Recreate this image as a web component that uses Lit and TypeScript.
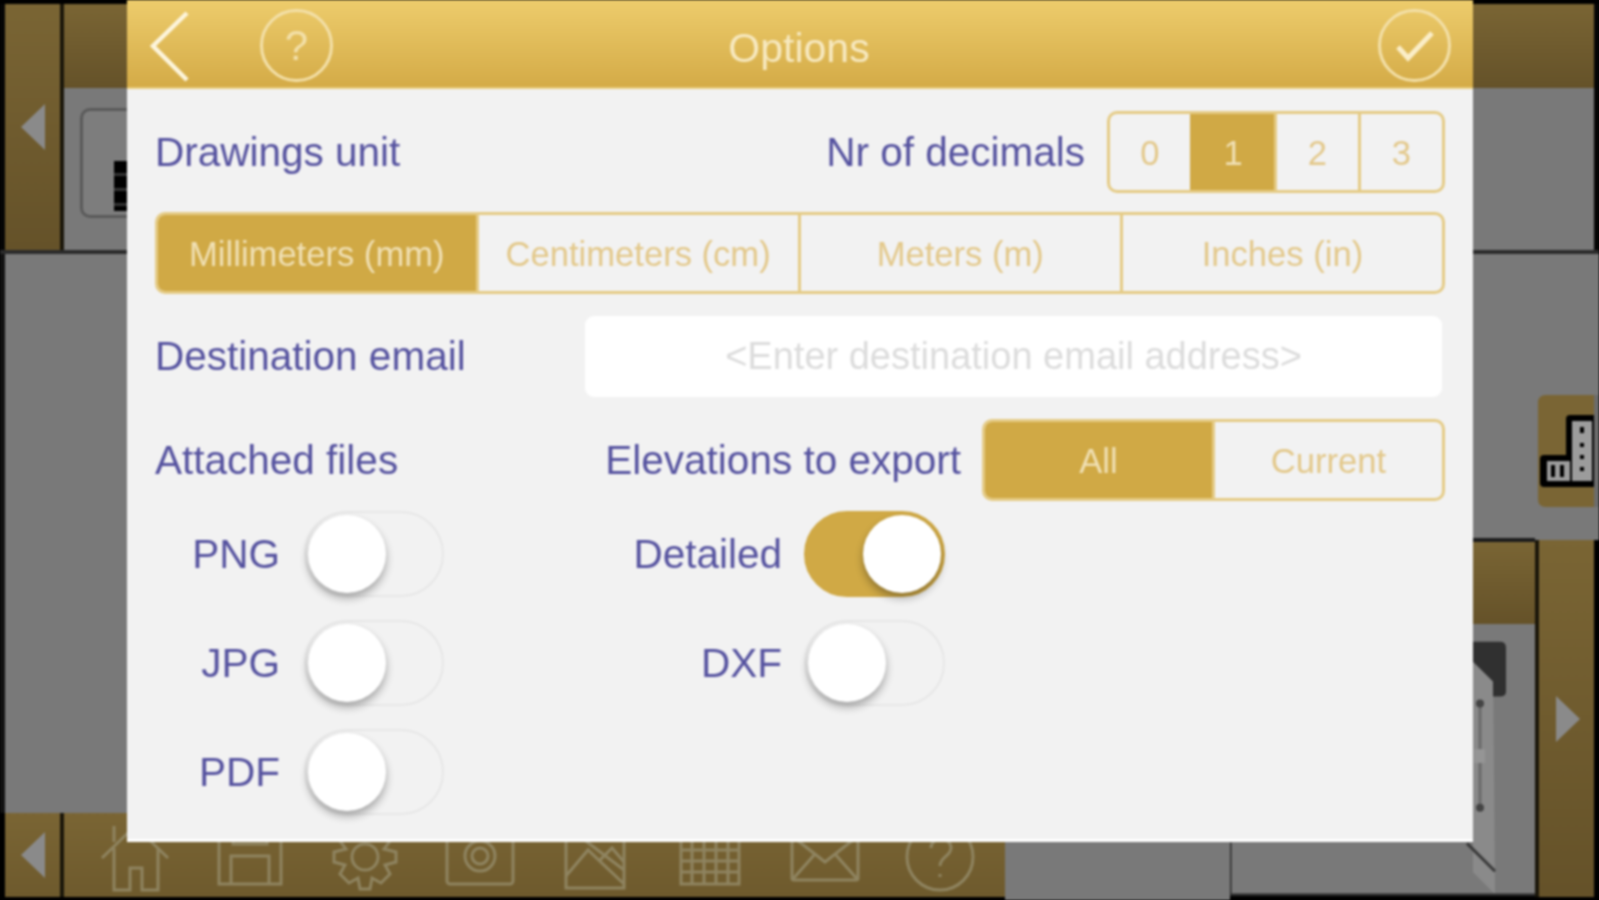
import { LitElement, html, css, svg } from "lit";
import { customElement } from "lit/decorators.js";

const ic = (body: unknown) => html`<svg class="ico" viewBox="0 0 70 70" fill="none" stroke="#8f8460" stroke-width="3">${body}</svg>`;

@customElement("app-root")
export class AppRoot extends LitElement {
  static styles = css`
    :host { display: block; width: 1599px; height: 900px; overflow: hidden; background: #000; }
    * { box-sizing: border-box; }
    .scene { position: relative; width: 1599px; height: 900px; background: #050505; font-family: "Liberation Sans", Arial, sans-serif; display: flex; flex-direction: column; filter: blur(0.9px); }
    .gold { background: linear-gradient(#7a6534, #655229); }
    .topblack { height: 4px; flex: none; background: #000; }
    .upper { height: 246px; flex: none; display: flex; padding: 0 5px; }
    .rail { width: 55px; flex: none; }
    .sep { width: 4px; flex: none; background: #1a160a; }
    .main { flex: 1; display: flex; flex-direction: column; }
    .bar { height: 84px; flex: none; }
    .greyarea { flex: 1; background: #797979; padding: 20px 0 0 16px; }
    .tool { width: 120px; height: 110px; border: 3px solid #5a5a5a; border-radius: 10px; background: #7d7d7d; padding: 50px 0 0 31px; }
    .tool i { display: block; width: 14px; height: 50px; background: repeating-linear-gradient(#000 0 12px, #333 12px 15px); }
    .line { height: 4px; flex: none; background: #2b2b2b; }
    .lower { flex: 1; display: flex; min-height: 0; background: #797979; }
    .a { width: 1230px; flex: none; display: flex; flex-direction: column; padding-left: 5px; }
    .a .space { flex: 1; background: #797979; margin-left: -5px; border-left: 5px solid #111; }
    .bottom { height: 87px; flex: none; display: flex; align-items: stretch; width: 1005px; background: #000; margin-left: -5px; padding: 0 0 3px 5px; }
    .bottom .rail, .bottom .bar2 { background: linear-gradient(#7a6534, #6e5a2d); }
    .rail.tri { display: flex; align-items: center; justify-content: center; }
    .bar2 { flex: 1; height: 84px; display: flex; align-items: flex-end; gap: 45px; padding: 0 0 5px 36px; }
    .ico { width: 70px; height: 70px; flex: none; }
    .b { width: 305px; flex: none; display: flex; flex-direction: column; }
    .b .space { height: 284px; flex: none; }
    .b .dark { height: 4px; flex: none; background: #1c1c1c; }
    .b .head { height: 82px; flex: none; }
    .b svg { flex: 1; display: block; min-height: 0; }
    .c { width: 64px; flex: none; display: flex; flex-direction: column; }
    .c .top { height: 286px; flex: none; padding: 141px 0 0 3px; }
    .c .top svg { display: block; }
    .c .low { flex: 1; display: flex; background: #000; padding-bottom: 3px; }
    .c .low .rail { display: flex; align-items: center; justify-content: center; padding-left: 2px; background: linear-gradient(#7a6534, #655229); }

    .modal { position: absolute; left: 127px; top: 0; width: 1346px; height: 842px; background: #f2f2f2; border-bottom: 3px solid #fff; display: flex; flex-direction: column; }
    .hdr { height: 89px; flex: none; background: linear-gradient(#edcc6c, #d4ab47); border-bottom: 2px solid #e8cc7c; display: grid; grid-template-columns: 1fr auto 1fr; align-items: center; padding: 4px 22px 0 20px; }
    .hdr svg { display: block; }
    .hl { display: flex; align-items: center; gap: 67px; }
    .hr { display: flex; justify-content: flex-end; }
    .circ { position: relative; width: 73px; height: 73px; border: 3px solid #f3e0a9; border-radius: 50%; display: flex; align-items: center; justify-content: center; color: #f3e0a9; font-size: 42px; }
    .title { font-size: 41px; color: #f7e9c0; padding-top: 5px; }
    .body { flex: 1; padding: 22px 28px 0; display: flex; flex-direction: column; }
    .row { display: flex; align-items: center; height: 82px; flex: none; }
    .r2 { margin-top: 19px; }
    .r3 { margin-top: 21px; }
    .r4 { margin-top: 22px; }
    .lab { font-size: 40.5px; color: #55529f; white-space: nowrap; }
    .push { margin-left: auto; }
    .seg { display: flex; height: 82px; border: 3px solid #e5cb85; border-radius: 10px; overflow: hidden; flex: none; }
    .seg div { flex: 1 1 0; display: flex; align-items: center; justify-content: center; font-size: 34.6px; color: #e3c88a; border-left: 3px solid #e5cb85; padding-top: 2px; }
    .seg div:first-child { border-left: 0; }
    .seg div.on { background: #d0a945; color: #f0e0b4; border-color: #d0a945; }
    .dec { width: 338px; margin-left: 22px; }
    .dec div:first-child { flex-grow: .98; }
    .unit { width: 100%; }
    .unit div:first-child { flex-grow: .995; }
    .ele { width: 463px; margin-left: 21px; }
    .input { width: 857px; height: 81px; margin-left: auto; margin-right: 3px; background: #fff; border-radius: 9px; display: flex; align-items: center; justify-content: center; color: #dcdcdc; font-size: 38px; }
    .togs { display: flex; margin-top: 10px; }
    .col { display: flex; flex-direction: column; gap: 23px; flex: none; }
    .col.l { width: 289px; }
    .col.rr { width: 501px; }
    .t { display: flex; align-items: center; justify-content: flex-end; gap: 24px; height: 86px; }
    .col.rr .t { gap: 22px; }
    .sw { position: relative; width: 140px; height: 86px; border: 2px solid #e7e7e7; border-radius: 43px; flex: none; }
    .col.rr .sw { width: 141px; }
    .sw i { position: absolute; left: 2px; top: 2px; width: 78px; height: 78px; border-radius: 50%; background: #fff; box-shadow: 0 5px 9px rgba(0,0,0,.32); }
    .sw.on { background: #d0a945; border-color: #d0a945; }
    .sw.on i { left: auto; right: 2px; }
  `;

  private seg(items: string[], on: number, cls: string) {
    return html`<div class="seg ${cls}">${items.map((s, i) => html`<div class=${i === on ? "on" : ""}>${s}</div>`)}</div>`;
  }
  private tog(label: string, on = false) {
    return html`<div class="t"><span class="lab">${label}</span><div class="sw ${on ? "on" : ""}"><i></i></div></div>`;
  }

  render() {
    const triL = html`<svg width="24" height="46" viewBox="0 0 24 46"><path d="M24 0V46L0 23Z" fill="#8a8a8a"/></svg>`;
    const triR = html`<svg width="24" height="46" viewBox="0 0 24 46"><path d="M0 0V46L24 23Z" fill="#8a8a8a"/></svg>`;
    return html`<div class="scene">
      <div class="topblack"></div>
      <div class="upper">
        <div class="rail gold tri">${triL}</div>
        <div class="sep"></div>
        <div class="main"><div class="bar gold"></div><div class="greyarea"><div class="tool"><i></i></div></div></div>
      </div>
      <div class="line"></div>
      <div class="lower">
        <div class="a">
          <div class="space"></div>
          <div class="bottom">
            <div class="rail tri">${triL}</div>
            <div class="sep"></div>
            <div class="bar2">
              ${ic(svg`<path d="M2 36L35 4L68 36M14 26V68H30V46H42V68H58V26M14 20V4"/>`)}
              ${ic(svg`<path d="M4 4H66V62H4ZM18 4V22H52V4M16 34H54V62H16Z"/>`)}
              ${ic(svg`<circle cx="35" cy="35" r="13"/><path d="M30 3H40L42 14L51 9L60 19L54 27L66 30V40L55 43L60 52L51 61L42 56L40 67H30L28 56L19 61L10 52L15 43L4 40V30L16 27L10 19L19 9L28 14Z"/>`)}
              ${ic(svg`<rect x="2" y="10" width="66" height="52" rx="3"/><circle cx="35" cy="34" r="15"/><circle cx="35" cy="34" r="8"/>`)}
              ${ic(svg`<rect x="6" y="4" width="58" height="62"/><path d="M6 54L28 28L64 62M40 38L52 26L64 40M6 4L64 48"/>`)}
              ${ic(svg`<path d="M6 6H64V62H6ZM6 17H64M6 28H64M6 39H64M6 50H64M17 6V62M29 6V62M41 6V62M53 6V62"/>`)}
              ${ic(svg`<rect x="2" y="12" width="66" height="46" rx="2"/><path d="M2 14L35 40L68 14M2 58L25 32M68 58L45 32"/>`)}
              ${ic(svg`<circle cx="35" cy="35" r="33"/><path d="M26 26C26 14 46 14 46 26C46 34 35 35 35 44M35 52V55"/>`)}
            </div>
          </div>
        </div>
        <div class="b">
          <div class="space"></div>
          <div class="dark"></div>
          <div class="head gold"></div>
          <svg viewBox="0 0 305 278" preserveAspectRatio="none">
            <rect width="305" height="278" fill="#797979"/>
            <path d="M263 38L243 18V250L265 272Z" fill="#8a8a8a"/>
            <path d="M237 221L265 249" stroke="#3a3a3a" stroke-width="3" fill="none"/>
            <path d="M243 18H270Q276 18 276 24V68Q276 73 270 73H263V58L243 38Z" fill="#303030"/>
            <path d="M250 80V185" stroke="#6a6a6a" stroke-width="3"/>
            <circle cx="250" cy="80" r="4" fill="#444"/><circle cx="250" cy="185" r="4" fill="#444"/>
            <rect x="244" y="126" width="11" height="14" fill="#959595"/>
            <path d="M0 220V273H305" stroke="#2a2a2a" stroke-width="3" fill="none"/>
            <rect y="274" width="305" height="4" fill="#000"/>
          </svg>
        </div>
        <div class="c">
          <div class="top">
            <svg width="61" height="112" viewBox="0 0 61 112">
              <path d="M8 0H56V112H8Q0 112 0 104V8Q0 0 8 0Z" fill="#7a6534"/>
              <path d="M28 24Q28 20 32 20H56V92H6Q2 92 2 88V64Q2 60 6 60H28Z" fill="#000"/>
              <rect x="34" y="26" width="20" height="60" fill="#9c9c9c"/>
              <rect x="9" y="66" width="23" height="20" fill="#9c9c9c"/>
              <path d="M44 32V38M44 48V52M44 60V64M44 72V76M15 70V82M24 70V82" stroke="#000" stroke-width="4"/>
              <rect x="56" width="5" height="112" fill="#6c6c6c"/>
            </svg>
          </div>
          <div class="low"><div class="sep"></div><div class="rail">${triR}</div></div>
        </div>
      </div>

      <div class="modal">
        <div class="hdr">
          <div class="hl">
            <svg width="46" height="74" viewBox="0 0 46 74" fill="none"><path d="M40 4L6 37L40 71" stroke="#fdf5dc" stroke-width="4.5"/></svg>
            <div class="circ">?</div>
          </div>
          <div class="title">Options</div>
          <div class="hr">
            <div class="circ"><svg width="42" height="34" viewBox="0 0 42 34" fill="none"><path d="M4 18L14 29L38 4" stroke="#fbeec8" stroke-width="5"/></svg></div>
          </div>
        </div>
        <div class="body">
          <div class="row">
            <span class="lab">Drawings unit</span>
            <span class="lab push">Nr of decimals</span>
            ${this.seg(["0", "1", "2", "3"], 1, "dec")}
          </div>
          <div class="row r2">${this.seg(["Millimeters (mm)", "Centimeters (cm)", "Meters (m)", "Inches (in)"], 0, "unit")}</div>
          <div class="row r3">
            <span class="lab">Destination email</span>
            <div class="input">&lt;Enter destination email address&gt;</div>
          </div>
          <div class="row r4">
            <span class="lab">Attached files</span>
            <span class="lab push">Elevations to export</span>
            ${this.seg(["All", "Current"], 0, "ele")}
          </div>
          <div class="togs">
            <div class="col l">${this.tog("PNG")}${this.tog("JPG")}${this.tog("PDF")}</div>
            <div class="col rr">${this.tog("Detailed", true)}${this.tog("DXF")}</div>
          </div>
        </div>
      </div>
    </div>`;
  }
}
